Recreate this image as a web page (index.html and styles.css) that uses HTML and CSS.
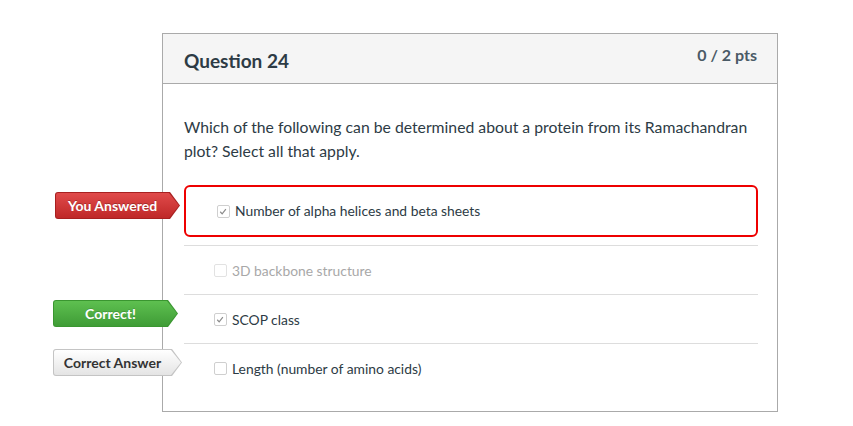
FILE: index.html
```html
<!DOCTYPE html>
<html lang="en">
<head>
<meta charset="utf-8">
<title>Question 24</title>
<link rel="stylesheet" href="styles.css">
</head>
<body>
<div class="page">
  <div class="card">
    <div class="card-header">
      <h2 class="q-title">Question 24</h2>
      <div class="q-points">0 / 2 pts</div>
    </div>
    <div class="card-body">
      <p class="q-text">Which of the following can be determined about a protein from its Ramachandran plot? Select all that apply.</p>
      <div class="answers">
        <div class="answer wrong">
          <div class="badge badge-red"><div class="badge-inner">You Answered</div></div>
          <span class="box checked"><svg viewBox="0 0 13 13" width="13" height="13"><polyline points="3.5,6.8 5.6,9 9.6,4" fill="none" stroke="#8a8a8a" stroke-width="1.3"/></svg></span>
          <span class="label">Number of alpha helices and beta sheets</span>
        </div>
        <div class="answer line disabled">
          <span class="box"></span>
          <span class="label">3D backbone structure</span>
        </div>
        <div class="answer line">
          <div class="badge badge-green"><div class="badge-inner">Correct!</div></div>
          <span class="box checked"><svg viewBox="0 0 13 13" width="13" height="13"><polyline points="3.5,6.8 5.6,9 9.6,4" fill="none" stroke="#8a8a8a" stroke-width="1.3"/></svg></span>
          <span class="label">SCOP class</span>
        </div>
        <div class="answer line">
          <div class="badge badge-gray"><div class="badge-inner">Correct Answer</div></div>
          <span class="box"></span>
          <span class="label">Length (number of amino acids)</span>
        </div>
      </div>
    </div>
  </div>
</div>
</body>
</html>
```

FILE: styles.css
```css
* { box-sizing: border-box; }
html, body { margin: 0; padding: 0; background: #fff; }
body {
  font-family: Lato, "Open Sans", "Liberation Sans", sans-serif;
  color: #2d3b45;
}
.page {
  padding: 33px 0 0 162px;
}
.card {
  width: 616px;
  border: 1px solid #aaaaaa;
  background: #fff;
}
.card-header {
  height: 50px;
  background: #f5f5f5;
  border-bottom: 1px solid #aaaaaa;
  display: flex;
  justify-content: space-between;
  align-items: flex-start;
  padding: 0 20px 0 21px;
}
.q-title {
  margin: 15px 0 0;
  font-size: 19px;
  line-height: 24px;
  font-weight: 700;
  color: #2d3b45;
}
.q-points {
  margin-top: 11px;
  font-size: 16px;
  line-height: 20px;
  font-weight: 700;
  color: #4a5a66;
}
.card-body {
  padding: 31px 19px 19px 21px;
}
.q-text {
  margin: 0 0 22px;
  font-size: 15.75px;
  line-height: 24px;
  color: #2d3b45;
}
.answers {
  display: flex;
  flex-direction: column;
}
.answer {
  position: relative;
  display: flex;
  align-items: center;
  height: 49px;
  padding-left: 30px;
  font-size: 13.85px;
}
.answer.line {
  border-top: 1px solid #dddddd;
  padding-top: 1px;
}
.answer.wrong {
  height: 52px;
  border: 2px solid #ee0000;
  border-radius: 6px;
  margin-bottom: 8px;
  padding-left: 31px;
}
.box {
  width: 13px;
  height: 13px;
  border: 1px solid #cfcfcf;
  border-radius: 2px;
  background: #fff;
  margin-right: 5px;
  display: inline-flex;
  flex: none;
}
.box svg { display: block; margin: -1px 0 0 -1px; }
.label { color: #2d3b45; line-height: 18px; }
.disabled .label { color: #a8a8a8; }
.disabled .box { border-color: #e2e2e2; }

.badge {
  position: absolute;
  height: 27px;
  padding: 1px;
  border-radius: 3px;
  clip-path: polygon(0 0, calc(100% - 10px) 0, 100% 50%, calc(100% - 10px) 100%, 0 100%);
}
.badge-inner {
  height: 100%;
  padding-right: 10px;
  border-radius: 2px;
  clip-path: polygon(0 0, calc(100% - 10px) 0, 100% 50%, calc(100% - 10px) 100%, 0 100%);
  display: flex;
  align-items: center;
  justify-content: center;
  font-size: 14px;
  font-weight: 700;
  color: #fff;
  white-space: nowrap;
}
.badge-red {
  left: -131px;
  top: 5px;
  width: 125px;
  background: #a82020;
}
.badge-red .badge-inner {
  background: linear-gradient(#e04a4a, #bf2828);
  text-shadow: 0 -1px 0 rgba(0,0,0,0.25);
}
.badge-green {
  left: -131px;
  top: 5px;
  width: 125px;
  background: #3a9630;
}
.badge-green .badge-inner {
  background: linear-gradient(#5ec050, #3f9c36);
  text-shadow: 0 -1px 0 rgba(0,0,0,0.15);
}
.badge-gray {
  left: -131px;
  top: 5px;
  width: 129px;
  background: #c4c4c4;
}
.badge-gray .badge-inner {
  background: linear-gradient(#ffffff, #e4e4e4);
  color: #333;
}
```
